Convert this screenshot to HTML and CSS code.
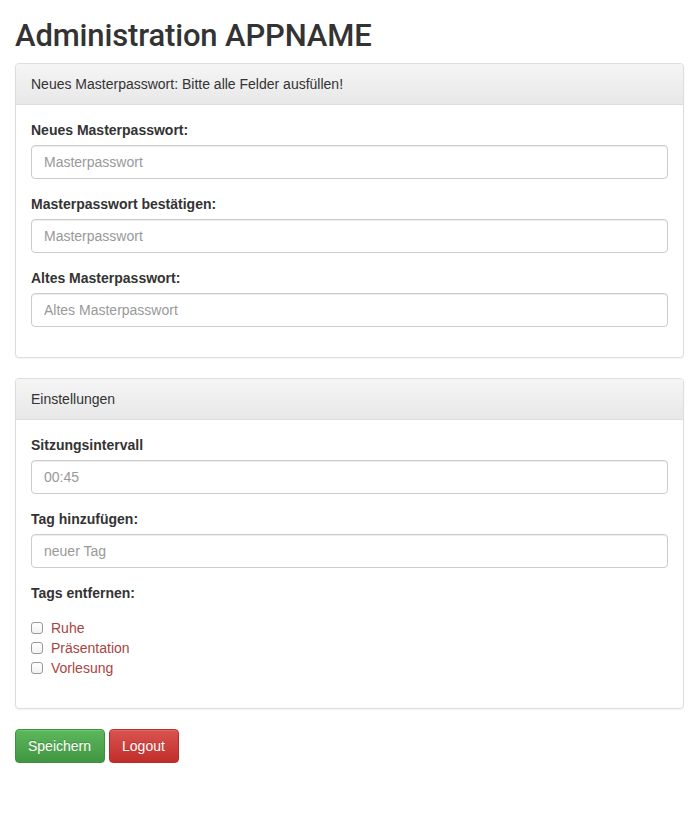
FILE: index.html
```html
<!DOCTYPE html>
<html lang="de">
<head>
<meta charset="utf-8">
<title>Administration APPNAME</title>
<link rel="stylesheet" href="styles.css">
</head>
<body>
<div class="container">
  <h1 class="title">Administration APPNAME</h1>
  <form>
    <div class="panel">
      <div class="panel-heading">Neues Masterpasswort: Bitte alle Felder ausfüllen!</div>
      <div class="panel-body">
        <div class="form-group">
          <label class="control-label">Neues Masterpasswort:</label>
          <input class="form-control" type="password" placeholder="Masterpasswort">
        </div>
        <div class="form-group">
          <label class="control-label">Masterpasswort bestätigen:</label>
          <input class="form-control" type="password" placeholder="Masterpasswort">
        </div>
        <div class="form-group">
          <label class="control-label">Altes Masterpasswort:</label>
          <input class="form-control" type="password" placeholder="Altes Masterpasswort">
        </div>
      </div>
    </div>
    <div class="panel">
      <div class="panel-heading">Einstellungen</div>
      <div class="panel-body">
        <div class="form-group">
          <label class="control-label">Sitzungsintervall</label>
          <input class="form-control" type="text" placeholder="00:45">
        </div>
        <div class="form-group">
          <label class="control-label">Tag hinzufügen:</label>
          <input class="form-control" type="text" placeholder="neuer Tag">
        </div>
        <div class="form-group">
          <label class="control-label">Tags entfernen:</label>
          <div class="checks">
            <label class="check"><input type="checkbox"><span>Ruhe</span></label>
            <label class="check"><input type="checkbox"><span>Präsentation</span></label>
            <label class="check"><input type="checkbox"><span>Vorlesung</span></label>
          </div>
        </div>
      </div>
    </div>
    <div class="actions">
      <button type="button" class="btn btn-success">Speichern</button>
      <button type="button" class="btn btn-danger">Logout</button>
    </div>
  </form>
</div>
</body>
</html>
```
FILE: styles.css
```css
* { box-sizing: border-box; }
html, body { margin: 0; padding: 0; }
body {
  font-family: "Liberation Sans", Arial, Helvetica, sans-serif;
  font-size: 14px;
  line-height: 20px;
  color: #333;
  background: #fff;
}
.container { padding: 0 16px 0 15px; }
.title {
  font-family: Roboto, "Liberation Sans", Arial, sans-serif;
  font-size: 31px;
  font-weight: 500;
  letter-spacing: -0.15px;
  line-height: 36px;
  margin: 18px 0 9px;
  color: #333;
}
.panel {
  border: 1px solid #ddd;
  border-radius: 4px;
  margin-bottom: 20px;
  background: #fff;
  box-shadow: 0 1px 2px rgba(0,0,0,.05);
}
.panel-heading {
  padding: 10px 15px;
  border-bottom: 1px solid #ddd;
  border-radius: 3px 3px 0 0;
  background: linear-gradient(to bottom, #f5f5f5 0, #e8e8e8 100%);
  color: #333;
}
.panel-body { padding: 15px; }
.form-group { margin-bottom: 15px; }
.control-label {
  display: block;
  font-weight: bold;
  margin-bottom: 5px;
}
.form-control {
  display: block;
  width: 100%;
  height: 34px;
  padding: 6px 12px;
  font-family: inherit;
  font-size: 14px;
  line-height: 20px;
  color: #555;
  background: #fff;
  border: 1px solid #ccc;
  border-radius: 4px;
  box-shadow: inset 0 1px 1px rgba(0,0,0,.075);
}
.form-control::placeholder { color: #999; }
.checks {
  display: flex;
  flex-direction: column;
  margin-top: 15px;
}
.check {
  display: flex;
  align-items: center;
  height: 20px;
  color: #a94442;
  font-weight: normal;
}
.check input {
  appearance: none;
  -webkit-appearance: none;
  width: 12px;
  height: 12px;
  margin: 0 8px 0 0;
  border: 1px solid #9a9a9a;
  border-radius: 3px;
  background: linear-gradient(to bottom, #fff, #f2f2f2);
}
.actions { display: flex; gap: 4px; }
.btn {
  height: 34px;
  padding: 6px 12px;
  font-family: inherit;
  font-size: 14px;
  line-height: 20px;
  color: #fff;
  border-radius: 4px;
  border: 1px solid transparent;
  text-shadow: 0 -1px 0 rgba(0,0,0,.2);
  box-shadow: inset 0 1px 0 rgba(255,255,255,.15), 0 1px 1px rgba(0,0,0,.075);
  cursor: pointer;
}
.btn-success {
  background: linear-gradient(to bottom, #5cb85c 0, #419641 100%);
  border-color: #3e8f3e;
  padding-right: 13px;
}
.btn-danger {
  background: linear-gradient(to bottom, #d9534f 0, #c12e2a 100%);
  border-color: #b92c28;
  padding-right: 13px;
  padding-left: 12px;
}
```
